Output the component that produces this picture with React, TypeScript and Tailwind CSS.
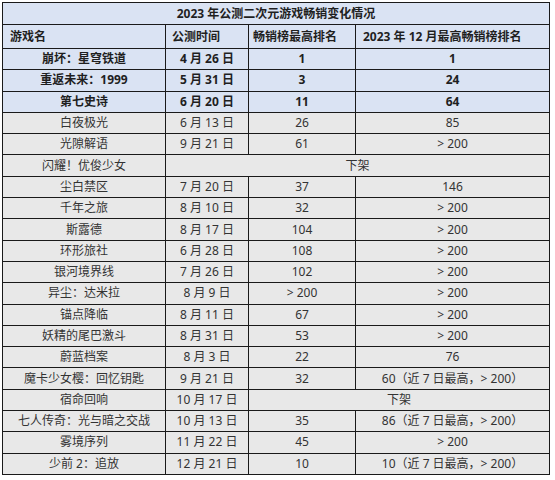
import React from "react";

type Row = {
  name: string;
  date?: string;
  peak?: string;
  dec?: string;
  bold?: boolean;
  delisted?: "all" | "after-date";
};

const rows: Row[] = [
  { name: "崩坏：星穹铁道", date: "4 月 26 日", peak: "1", dec: "1", bold: true },
  { name: "重返未来：1999", date: "5 月 31 日", peak: "3", dec: "24", bold: true },
  { name: "第七史诗", date: "6 月 20 日", peak: "11", dec: "64", bold: true },
  { name: "白夜极光", date: "6 月 13 日", peak: "26", dec: "85" },
  { name: "光隙解语", date: "9 月 21 日", peak: "61", dec: "> 200" },
  { name: "闪耀！优俊少女", delisted: "all" },
  { name: "尘白禁区", date: "7 月 20 日", peak: "37", dec: "146" },
  { name: "千年之旅", date: "8 月 10 日", peak: "32", dec: "> 200" },
  { name: "斯露德", date: "8 月 17 日", peak: "104", dec: "> 200" },
  { name: "环形旅社", date: "6 月 28 日", peak: "108", dec: "> 200" },
  { name: "银河境界线", date: "7 月 26 日", peak: "102", dec: "> 200" },
  { name: "异尘：达米拉", date: "8 月 9 日", peak: "> 200", dec: "> 200" },
  { name: "锚点降临", date: "8 月 11 日", peak: "67", dec: "> 200" },
  { name: "妖精的尾巴激斗", date: "8 月 31 日", peak: "53", dec: "> 200" },
  { name: "蔚蓝档案", date: "8 月 3 日", peak: "22", dec: "76" },
  { name: "魔卡少女樱：回忆钥匙", date: "9 月 21 日", peak: "32", dec: "60（近 7 日最高，> 200）" },
  { name: "宿命回响", date: "10 月 17 日", delisted: "after-date" },
  { name: "七人传奇：光与暗之交战", date: "10 月 13 日", peak: "35", dec: "86（近 7 日最高，> 200）" },
  { name: "雾境序列", date: "11 月 22 日", peak: "45", dec: "> 200" },
  { name: "少前 2：追放", date: "12 月 21 日", peak: "10", dec: "10（近 7 日最高，> 200）" },
];

const cell = "flex items-center border-r border-b border-[#1a1a1a] whitespace-nowrap";

export default function App() {
  return (
    <div className="h-[480px] w-[555px] bg-white pl-[2px] pt-[2px] font-['Noto_Sans','Noto_Sans_CJK_SC',sans-serif] text-[12px] leading-none text-[#333]">
      <div className="grid w-[548px] grid-cols-[163px_83px_107px_194px] grid-rows-[22px_24px_repeat(20,21.3px)] border-l border-t border-[#1a1a1a]">
        <div className={`${cell} col-span-4 justify-center bg-[#dae3f3] font-bold text-[#1f1f1f]`}>
          2023 年公测二次元游戏畅销变化情况
        </div>
        <div className={`${cell} bg-[#dae3f3] pl-[7px] font-bold text-[#1f1f1f]`}>游戏名</div>
        <div className={`${cell} bg-[#dae3f3] pl-[6px] font-bold text-[#1f1f1f]`}>公测时间</div>
        <div className={`${cell} bg-[#dae3f3] pl-[4px] font-bold text-[#1f1f1f]`}>畅销榜最高排名</div>
        <div className={`${cell} bg-[#dae3f3] pl-[7px] font-bold text-[#1f1f1f]`}>
          2023 年 12 月最高畅销榜排名
        </div>

        {rows.map((r) => {
          const bg = r.bold ? "bg-[#dae3f3] font-bold text-[#1f1f1f]" : "bg-[#e8e8e8]";
          return (
            <React.Fragment key={r.name}>
              <div className={`${cell} ${bg} justify-center`}>{r.name}</div>
              {r.delisted === "all" ? (
                <div className={`${cell} ${bg} col-span-3 justify-center`}>下架</div>
              ) : r.delisted === "after-date" ? (
                <>
                  <div className={`${cell} ${bg} justify-center`}>{r.date}</div>
                  <div className={`${cell} ${bg} col-span-2 justify-center`}>下架</div>
                </>
              ) : (
                <>
                  <div className={`${cell} ${bg} justify-center`}>{r.date}</div>
                  <div className={`${cell} ${bg} justify-center`}>{r.peak}</div>
                  <div className={`${cell} ${bg} justify-center`}>{r.dec}</div>
                </>
              )}
            </React.Fragment>
          );
        })}
      </div>
    </div>
  );
}
